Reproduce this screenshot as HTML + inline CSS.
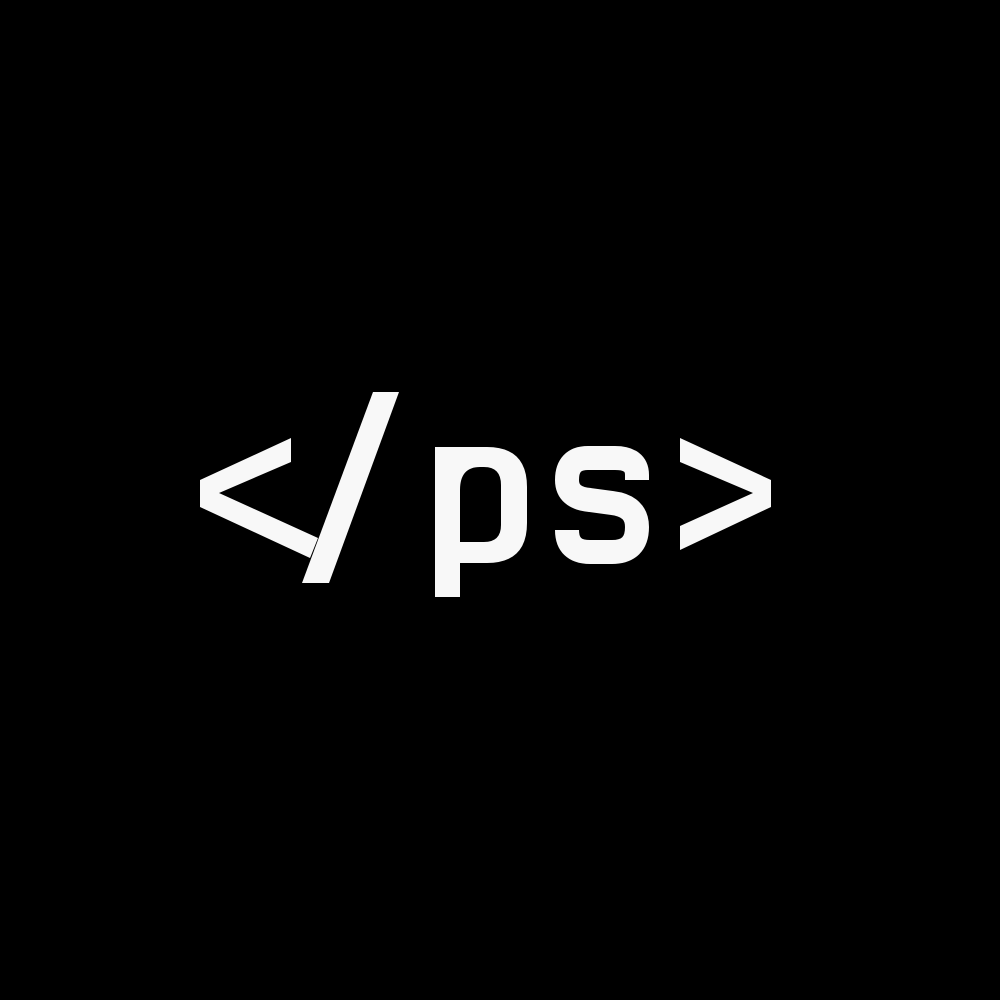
<!DOCTYPE html>
<html><head><meta charset="utf-8"><style>
html,body{margin:0;padding:0;background:#000;width:1000px;height:1000px;overflow:hidden}
.t{position:absolute;left:0;top:0;color:transparent;font-family:"Liberation Mono",monospace;font-size:1px}
</style></head><body>
<span class="t">&lt;/ps&gt;</span>
<svg width="1000" height="1000" viewBox="0 0 1000 1000" style="position:absolute;left:0;top:0">
<g fill="#f8f8f8">
<polygon points="291,438 291,462 219,493 318,538 310,558 200,507 200,480"/>
<polygon points="373,392 399,392 329,583 302,583"/>
<polygon points="680,438 771,480 771,507 680,550 680,526 753,493 680,462"/>
<rect x="435" y="447" width="25" height="150"/>
<path fill-rule="evenodd" d="M435,447 L487,447 Q527,447 527,487 L527,523 Q527,563 487,563 L435,563 Z M460,490 Q460,467 480,467 L484,467 Q501,467 501,485 L501,525 Q501,542 484,542 L460,542 Z"/>
</g>
<path d="M637,480 L637,475 Q637,458 615,458 L588,458 Q567,458 567,480 Q567,498 590,500 L612,503 Q637,506 637,527 Q637,552 612,552 L590,552 Q567,552 567,530" fill="none" stroke="#f8f8f8" stroke-width="24"/>
</svg>
</body></html>
